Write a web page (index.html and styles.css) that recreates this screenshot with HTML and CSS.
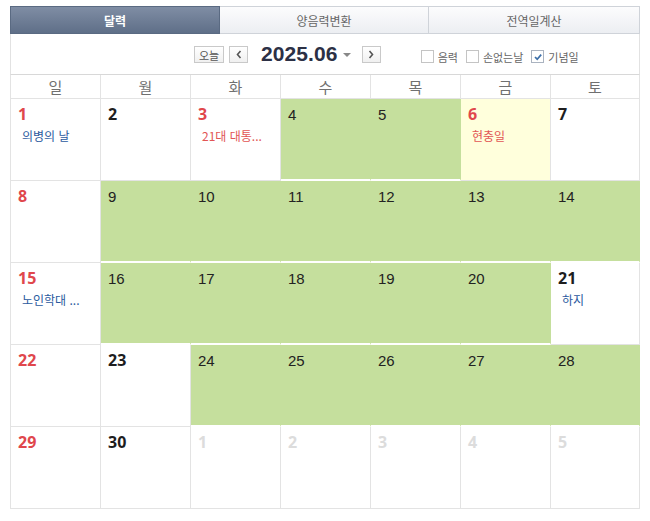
FILE: index.html
```html
<!DOCTYPE html>
<html lang="ko">
<head>
<meta charset="utf-8">
<title>달력</title>
<link rel="stylesheet" href="styles.css">
</head>
<body>
<div class="cal">
  <div class="tabs">
    <div class="tab active">달력</div>
    <div class="tab">양음력변환</div>
    <div class="tab">전역일계산</div>
  </div>
  <div class="toolbar">
    <span class="btn today">오늘</span>
    <span class="btn arrow"><svg width="8" height="9" viewBox="0 0 8 9"><path d="M5.5 1 L2.5 4.5 L5.5 8" fill="none" stroke="#555" stroke-width="1.6"/></svg></span>
    <span class="title">2025.06</span>
    <span class="caret"></span>
    <span class="btn arrow next"><svg width="8" height="9" viewBox="0 0 8 9"><path d="M2.5 1 L5.5 4.5 L2.5 8" fill="none" stroke="#555" stroke-width="1.6"/></svg></span>
    <label class="chk first"><span class="box"></span>음력</label>
    <label class="chk"><span class="box"></span>손없는날</label>
    <label class="chk"><span class="box checked"><svg width="10" height="10" viewBox="0 0 10 10"><path d="M2 5 L4.2 7.2 L8.2 2.6" fill="none" stroke="#3d6fa8" stroke-width="1.7"/></svg></span>기념일</label>
  </div>
  <div class="grid">
    <div class="head">일</div><div class="head">월</div><div class="head">화</div><div class="head">수</div><div class="head">목</div><div class="head">금</div><div class="head">토</div>

    <div class="day"><span class="num red">1</span><span class="ev blue">의병의 날</span></div>
    <div class="day"><span class="num">2</span></div>
    <div class="day"><span class="num red">3</span><span class="ev redt">21대 대통...</span></div>
    <div class="day green"><span class="num">4</span></div>
    <div class="day green"><span class="num">5</span></div>
    <div class="day today-cell"><span class="num red">6</span><span class="ev redt">현충일</span></div>
    <div class="day"><span class="num">7</span></div>

    <div class="day"><span class="num red">8</span></div>
    <div class="day green"><span class="num">9</span></div>
    <div class="day green"><span class="num">10</span></div>
    <div class="day green"><span class="num">11</span></div>
    <div class="day green"><span class="num">12</span></div>
    <div class="day green"><span class="num">13</span></div>
    <div class="day green"><span class="num">14</span></div>

    <div class="day"><span class="num red">15</span><span class="ev blue">노인학대 ...</span></div>
    <div class="day green"><span class="num">16</span></div>
    <div class="day green"><span class="num">17</span></div>
    <div class="day green"><span class="num">18</span></div>
    <div class="day green"><span class="num">19</span></div>
    <div class="day green"><span class="num">20</span></div>
    <div class="day"><span class="num">21</span><span class="ev blue">하지</span></div>

    <div class="day"><span class="num red">22</span></div>
    <div class="day"><span class="num">23</span></div>
    <div class="day green"><span class="num">24</span></div>
    <div class="day green"><span class="num">25</span></div>
    <div class="day green"><span class="num">26</span></div>
    <div class="day green"><span class="num">27</span></div>
    <div class="day green"><span class="num">28</span></div>

    <div class="day"><span class="num red">29</span></div>
    <div class="day"><span class="num">30</span></div>
    <div class="day"><span class="num other">1</span></div>
    <div class="day"><span class="num other">2</span></div>
    <div class="day"><span class="num other">3</span></div>
    <div class="day"><span class="num other">4</span></div>
    <div class="day"><span class="num other">5</span></div>
  </div>
</div>
</body>
</html>
```
FILE: styles.css
```css
* { box-sizing: border-box; }
html, body { margin: 0; padding: 0; background: #fff; }
body { font-family: "Noto Sans CJK KR", "Noto Sans", sans-serif; }

.cal {
  width: 630px;
  margin: 6px 0 0 10px;
}

.tabs {
  display: flex;
  height: 28px;
}
.tab {
  flex: 1;
  display: flex;
  align-items: center;
  justify-content: center;
  font-size: 12px;
  color: #666;
  background: linear-gradient(#fcfcfd, #eceef2);
  border: 1px solid #cfd3d9;
  border-left: none;
}
.tab:last-child { flex: 0 0 211px; }
.tab.active {
  color: #fff;
  font-weight: 700;
  background: linear-gradient(#7f8da4, #5f6f88);
  border: 1px solid #5a6a82;
}

.toolbar {
  display: flex;
  align-items: center;
  height: 41px;
  padding-left: 183px;
  border-left: 1px solid #e2e2e2;
  border-right: 1px solid #e2e2e2;
  border-bottom: 1px solid #d8d8d8;
}
.btn {
  display: flex;
  align-items: center;
  justify-content: center;
  height: 17px;
  border: 1px solid #c9c9c9;
  background: linear-gradient(#ffffff, #f0f0f0);
  color: #555;
  font-size: 11px;
}
.btn.today { width: 30px; margin-top: 1px; }
.btn.arrow { width: 19px; margin-left: 5px; margin-top: 1px; }
.btn.next { margin-left: 11px; }
.title {
  margin-left: 13px;
  font-family: "Liberation Sans", Arial, sans-serif;
  font-weight: 700;
  font-size: 21px;
  color: #2c3045;
  letter-spacing: 0.1px;
}
.caret {
  margin-left: 5px;
  margin-top: 2px;
  width: 0;
  height: 0;
  border-left: 4px solid transparent;
  border-right: 4px solid transparent;
  border-top: 4px solid #888;
}
.chk {
  display: flex;
  align-items: center;
  margin-left: 8px;
  margin-top: 5px;
  font-size: 11px;
  color: #666;
}
.chk.first { margin-left: 40px; }
.box {
  width: 13px;
  height: 13px;
  border: 1px solid #c4c4c4;
  background: #fff;
  margin-right: 4px;
  display: flex;
  align-items: center;
  justify-content: center;
}
.box.checked { border-color: #aab3c0; }

.grid {
  display: grid;
  grid-template-columns: repeat(6, 90px) 89px;
  grid-template-rows: 24px;
  grid-auto-rows: 82px;
  border-left: 1px solid #e3e3e3;
}
.head {
  border-right: 1px solid #e3e3e3;
  border-bottom: 1px solid #e3e3e3;
  display: flex;
  align-items: center;
  justify-content: center;
  font-size: 15px;
  color: #707070;
  line-height: 1;
}

.day {
  border-right: 1px solid #e3e3e3;
  border-bottom: 1px solid #e3e3e3;
  padding: 4px 0 0 7px;
  display: flex;
  flex-direction: column;
  align-items: flex-start;
}
.day.green {
  background: #c5df9d;
  border-right-color: #c5df9d;
  border-bottom: 2px solid #fff;
}
.day.today-cell { background: #ffffdc; }

.num {
  font-family: "Noto Sans", sans-serif;
  font-weight: 700;
  font-size: 16px;
  line-height: 22px;
  color: #1e1e1e;
}
.green .num {
  font-family: "Liberation Sans", Arial, sans-serif;
  font-weight: 400;
  font-size: 15px;
  color: #222;
  margin-top: 1px;
}
.num.red { color: #e0474c; }
.num.other { color: #dcdcdc; }

.ev {
  margin-left: 4px;
  margin-top: 3px;
  font-size: 12px;
  line-height: 16px;
  white-space: nowrap;
}
.ev.blue { color: #2b5a9e; }
.ev.redt { color: #e25555; }
```
